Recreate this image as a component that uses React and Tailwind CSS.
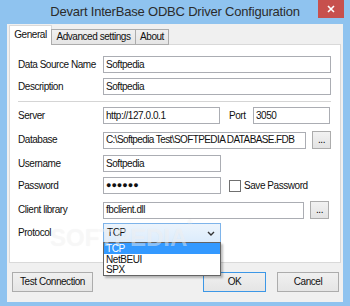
import React from "react";

const Field = ({ value, className = "" }) => (
  <div className={`h-[17px] border border-[#abadb3] bg-white flex items-center pl-[2px] text-[#111] overflow-hidden whitespace-nowrap ${className}`}>
    {value}
  </div>
);

const Dots = () => (
  <div className="h-[18px] w-[19px] border border-[#acacac] bg-gradient-to-b from-[#f2f2f2] to-[#e3e3e3] flex items-end justify-center pb-[3px] text-[10px] leading-none text-black">
    ...
  </div>
);

const Label = ({ children }) => (
  <div className="w-[85px] shrink-0 text-[#111]">{children}</div>
);

const App = () => {
  return (
    <div className="relative w-[350px] h-[306px] bg-[#8fc3ef] flex flex-col overflow-hidden font-['Liberation_Sans',sans-serif] text-[10px] tracking-[-0.45px] leading-none">
      {/* title bar */}
      <div className="h-[24px] shrink-0 flex items-center justify-center pb-[1px]">
        <span className="text-[13px] tracking-[-0.2px] text-[#2b2b2b]">Devart InterBase ODBC Driver Configuration</span>
      </div>
      <div className="absolute top-0 right-[6px] w-[26px] h-[18px] bg-[#c7504d] flex items-center justify-center">
        <svg width="8" height="8" viewBox="0 0 8 8">
          <path d="M1 1 L7 7 M7 1 L1 7" stroke="white" strokeWidth="1.6" />
        </svg>
      </div>

      {/* client area */}
      <div className="mx-[7px] h-[278px] bg-[#f0f0f0] flex flex-col px-[2px] pt-[1px]">
        {/* tabs */}
        <div className="h-[20px] flex items-end relative z-10">
          <div className="h-[20px] w-[43px] bg-white border border-b-0 border-[#d9d9d9] flex items-center justify-center pb-[1px] text-[#111]">
            General
          </div>
          <div className="h-[16px] w-[85px] -ml-[1px] border border-[#acacac] bg-gradient-to-b from-[#f0f0f0] to-[#e5e5e5] flex items-center justify-center text-[#111]">
            Advanced settings
          </div>
          <div className="h-[16px] w-[34px] -ml-[1px] border border-[#acacac] bg-gradient-to-b from-[#f0f0f0] to-[#e5e5e5] flex items-center justify-center text-[#111]">
            About
          </div>
        </div>

        {/* panel */}
        <div className="-mt-[1px] h-[219px] border border-[#d9d9d9] bg-white flex flex-col pl-[8px]">
          <div className="mt-[11px] flex items-center">
            <Label>Data Source Name</Label>
            <Field value="Softpedia" className="w-[228px]" />
          </div>
          <div className="mt-[5px] flex items-center">
            <Label>Description</Label>
            <Field value="Softpedia" className="w-[228px]" />
          </div>
          <div className="mt-[6px] w-[313px] h-[2px] border-t border-[#d5d5d5] border-b border-b-white" />
          <div className="mt-[4px] flex items-center">
            <Label>Server</Label>
            <Field value="http://127.0.0.1" className="w-[117px]" />
            <div className="w-[33px] pl-[9px] text-[#111]">Port</div>
            <Field value="3050" className="w-[77px]" />
          </div>
          <div className="mt-[7px] flex items-center">
            <Label>Database</Label>
            <Field value="C:\Softpedia Test\SOFTPEDIA DATABASE.FDB" className="w-[203px] tracking-[-0.6px]" />
            <div className="ml-[6px]">
              <Dots />
            </div>
          </div>
          <div className="mt-[6px] flex items-center">
            <Label>Username</Label>
            <Field value="Softpedia" className="w-[118px]" />
          </div>
          <div className="mt-[5px] flex items-center">
            <Label>Password</Label>
            <Field value="●●●●●●" className="w-[118px] text-[9px] tracking-[0px]" />
            <div className="ml-[8px] w-[12px] h-[12px] border border-[#707070] bg-white" />
            <div className="ml-[3px] text-[#111]">Save Password</div>
          </div>
          <div className="mt-[7px] flex items-center">
            <Label>Client library</Label>
            <Field value="fbclient.dll" className="w-[201px]" />
            <div className="ml-[6px]">
              <Dots />
            </div>
          </div>
          <div className="mt-[4px] flex items-center">
            <Label>Protocol</Label>
            <div className="h-[20px] w-[118px] border border-[#7eb4ea] bg-gradient-to-b from-[#ecf4fc] to-[#dcecfc] flex items-center justify-between pl-[3px] pr-[5px] text-[#111]">
              <span>TCP</span>
              <svg width="8" height="5" viewBox="0 0 8 5">
                <path d="M1 1 L4 4 L7 1" stroke="#333" strokeWidth="1.4" fill="none" />
              </svg>
            </div>
          </div>
        </div>

        {/* buttons */}
        <div className="mt-[9px] flex items-center pl-[3px]">
          <div className="h-[20px] w-[81px] border border-[#acacac] bg-gradient-to-b from-[#f0f0f0] to-[#e5e5e5] flex items-center justify-center text-[#111]">
            Test Connection
          </div>
          <div className="ml-auto h-[20px] w-[63px] border border-[#3c97e6] bg-gradient-to-b from-[#f0f0f0] to-[#e5e5e5] flex items-center justify-center text-[#111]">
            OK
          </div>
          <div className="ml-[11px] mr-[2px] h-[20px] w-[62px] border border-[#acacac] bg-gradient-to-b from-[#f0f0f0] to-[#e5e5e5] flex items-center justify-center text-[#111]">
            Cancel
          </div>
        </div>
      </div>

      {/* open dropdown list */}
      <div className="absolute left-[103px] top-[242px] w-[118px] h-[34px] bg-white border border-[#646464] shadow-[2px_2px_2px_rgba(0,0,0,0.25)] flex flex-col">
        <div className="h-[11px] bg-[#3399ff] text-white flex items-center pl-[2px]">TCP</div>
        <div className="h-[11px] text-[#111] flex items-center pl-[2px]">NetBEUI</div>
        <div className="h-[10px] text-[#111] flex items-center pl-[2px]">SPX</div>
      </div>

      {/* watermark */}
      <div className="absolute left-[50px] top-[226px] text-[24px] font-bold tracking-[0px] text-white/45 [text-shadow:0_0_1px_rgba(0,0,0,0.06)] pointer-events-none">
        SOFTPEDIA<sup className="text-[7px] align-top">®</sup>
      </div>
    </div>
  );
};

export default App;
